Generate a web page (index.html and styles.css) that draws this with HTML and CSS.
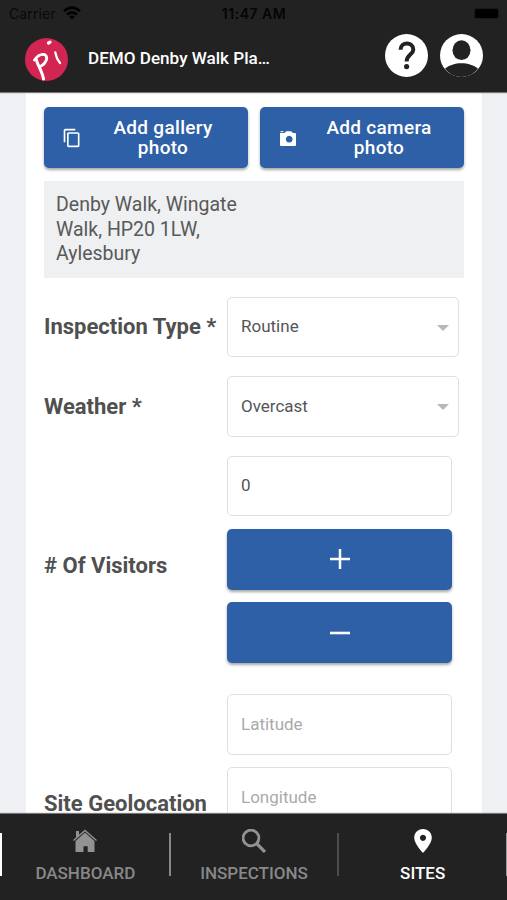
FILE: index.html
```html
<!DOCTYPE html>
<html lang="en">
<head>
<meta charset="utf-8">
<meta name="viewport" content="width=device-width, initial-scale=1">
<title>Denby Walk</title>
<link rel="stylesheet" href="styles.css">
</head>
<body>
<div class="app">
  <header class="header">
    <div class="status">
      <div class="carrier"><span class="carrier-name">Carrier</span>
        <svg class="wifi" viewBox="0 0 18 14" fill="none" stroke="#000" stroke-width="2.7"><path d="M1 5.2Q9-1.8 17 5.2M4 8.6Q9 4.2 14 8.6"/><path d="M9 13.6L5.9 10.6Q9 8.2 12.1 10.6Z" fill="#000" stroke="none"/></svg>
      </div>
      <span class="clock">11:47 AM</span>
      <div class="battery"></div>
    </div>
    <div class="toolbar">
      <svg class="logo" viewBox="0 0 43 43" fill="none" stroke="#fff" stroke-width="3" stroke-linecap="round"><circle cx="21.5" cy="21.5" r="21.5" fill="#d32552" stroke="none"/><path d="M9.500 22C12 18.500 16 16 19 16.500C23.500 17.500 22.500 25 14.500 29" stroke-width="2.900"/><path d="M11.500 22C12.500 27 17.500 34 18.500 41" stroke-width="3"/><path d="M30.300 14.500C31 18.500 32.500 22 35 25" stroke-width="2.300"/><path d="M23.500 5L25 4.200" stroke-width="3.200"/></svg>
      <h1 class="title">DEMO Denby Walk Pla…</h1>
      <div class="actions">
        <svg class="action" viewBox="0 0 43 43"><circle cx="21.500" cy="21.500" r="21.500" fill="#fff"/><path d="M15.600 15.700C15.600 7.600 28.300 7.600 28.300 15.400C28.300 20.700 21.600 20.500 21.600 27.500" fill="none" stroke="#222" stroke-width="4"/><circle cx="21.600" cy="32.600" r="2.600" fill="#222"/></svg>
        <svg class="action" viewBox="0 0 43 43"><circle cx="21.500" cy="21.500" r="21.500" fill="#fff"/><ellipse cx="21.500" cy="16.200" rx="9" ry="9.900" fill="#222"/><path d="M5 34.700C13 27.300 30 27.300 38 34.700C29.500 45.600 13.500 45.600 5 34.700Z" fill="#222"/></svg>
      </div>
    </div>
  </header>
  <main class="content">
    <section class="card">
      <div class="photo-buttons">
        <button class="btn photo"><svg class="btn-icon" viewBox="0 0 24 24" fill="#fff"><path d="M16 1H4c-1.100 0-2 .9-2 2v14h2V3h12V1zm3 4H8c-1.100 0-2 .9-2 2v14c0 1.100.9 2 2 2h11c1.100 0 2-.9 2-2V7c0-1.100-.9-2-2-2zm0 16H8V7h11v14z"/></svg><span class="btn-text">Add gallery<br>photo</span></button>
        <button class="btn photo"><svg class="btn-icon" viewBox="0 0 20 20" fill="#fff"><path fill-rule="evenodd" d="M2 5h4.500l1.700-1.700h5L15 5H17q1 0 1 1v11q0 1-1 1H3q-1 0-1-1zM11.200 7.800a3.400 3.400 0 1 0 .01 0z"/><path d="M2.500 3.200h3v1h-3z"/></svg><span class="btn-text">Add camera<br>photo</span></button>
      </div>
      <address class="address">Denby Walk, Wingate<br>Walk, HP20 1LW,<br>Aylesbury</address>
      <div class="row">
        <div class="label">Inspection Type *</div>
        <div class="fields wide"><div class="field select">Routine<span class="caret"></span></div></div>
      </div>
      <div class="row">
        <div class="label">Weather *</div>
        <div class="fields wide"><div class="field select">Overcast<span class="caret"></span></div></div>
      </div>
      <div class="row">
        <div class="label"># Of Visitors</div>
        <div class="fields">
          <div class="field">0</div>
          <button class="btn step" aria-label="Increase"><svg viewBox="0 0 20 20" stroke="#fff" stroke-width="2.500"><path d="M0 10H20M10 0V20"/></svg></button>
          <button class="btn step" aria-label="Decrease"><svg viewBox="0 0 20 20" stroke="#fff" stroke-width="2.600"><path d="M0 10H20"/></svg></button>
        </div>
      </div>
      <div class="row">
        <div class="label">Site Geolocation</div>
        <div class="fields">
          <div class="field placeholder">Latitude</div>
          <div class="field placeholder">Longitude</div>
          <div class="field placeholder"></div>
        </div>
      </div>
    </section>
  </main>
  <nav class="nav">
    <span class="divider edge"></span>
    <a class="tab"><svg class="tab-icon" viewBox="0 0 24 24" fill="#929292"><path d="M2.500 12L12 3.500L21.500 12V23H14.700V17.200H10.500V23H2.500Z"/><path d="M3 2H6V6.500L3 9.300Z"/><path d="M.5 11.500L12 1.500L23.500 11.500" fill="none" stroke="#929292" stroke-width="1.400"/></svg><span class="tab-name">DASHBOARD</span></a>
    <span class="divider"></span>
    <a class="tab"><svg class="tab-icon" viewBox="0 0 24 24" fill="none" stroke="#929292" stroke-width="2.800"><circle cx="9" cy="9" r="7.900"/><path d="M14.700 14.700L23 23" stroke-width="3.200"/></svg><span class="tab-name">INSPECTIONS</span></a>
    <span class="divider dim"></span>
    <a class="tab active"><svg class="tab-icon" viewBox="0 0 24 24" fill="#fff"><path fill-rule="evenodd" d="M12 0C7 0 3.200 3.800 3.200 8.800C3.200 15.200 12 24 12 24S20.800 15.200 20.800 8.800C20.800 3.800 17 0 12 0ZM12 5.700a3.100 3.100 0 1 1-.01 0z"/></svg><span class="tab-name">SITES</span></a>
    <span class="divider last"></span>
  </nav>
</div>
</body>
</html>
```

FILE: styles.css
```css
* { box-sizing: border-box; }
body { margin: 0; font-family: Roboto, "Liberation Sans", sans-serif; color: #505050; background: #eef0f3; }
.app { height: 900px; display: flex; flex-direction: column; overflow: hidden; }
.header { flex: none; height: 92px; background: #222; display: flex; flex-direction: column; box-shadow: 0 1px 1px #777; z-index: 1; }
.status { height: 28px; padding: 0 8px 0 9px; display: grid; grid-template-columns: 1fr auto 1fr; align-items: center; font-family: Inter, sans-serif; font-size: 14px; line-height: 28px; color: #050505; }
.carrier { display: flex; align-items: center; gap: 7px; }
.carrier-name { color: #090909; letter-spacing: .1px; }
.wifi { width: 18px; height: 14px; margin-top: -2px; }
.clock { font-weight: 600; font-size: 14px; letter-spacing: .5px; }
.battery { justify-self: end; width: 25px; height: 11px; margin-top: -2px; border-radius: 3px; background: #000; border: 1px solid #191919; }
.toolbar { display: flex; align-items: center; height: 60px; padding: 0 24px 0 25px; }
.logo { width: 43px; height: 43px; margin-top: 2px; }
.title { margin: 0 0 0 20px; font-size: 17.100px; font-weight: 500; color: #fff; white-space: nowrap; }
.actions { margin: -6px 0 0 auto; display: flex; gap: 12px; }
.action { width: 43px; height: 43px; }
.content { flex: 1; min-height: 0; overflow: hidden; padding: 0 25px 0 26px; }
.card { background: #fff; padding: 15px 18px 0; }
.photo-buttons { display: grid; grid-template-columns: 1fr 1fr; gap: 12px; }
.btn { border: 0; border-radius: 5px; background: #2d60a7; height: 61px; color: #fff; font-family: inherit; box-shadow: 0 2px 3px rgba(0, 0, 0, .35); }
.photo { display: flex; align-items: center; padding: 0 33px 0 18px; }
.btn-icon { width: 20px; height: 20px; flex: none; }
.btn-text { flex: 1; margin: 0 -4px 0 25px; font-size: 19px; line-height: 19.500px; font-weight: 500; letter-spacing: .3px; white-space: nowrap; }
.address { margin-top: 13px; height: 97px; padding: 12px; background: #eef0f2; font-style: normal; font-size: 19.500px; line-height: 24.500px; color: #595959; }
.row { display: flex; align-items: center; margin-top: 6.500px; }
.address + .row { margin-top: 18.500px; }
.label { width: 183px; font-size: 22px; font-weight: 700; white-space: nowrap; }
.fields { width: 225px; flex: none; }
.fields.wide { width: 232px; }
.fields > * { margin-bottom: 12.500px; }
.field { height: 60.500px; border: 1px solid #dfdfdf; border-radius: 5px; padding: 0 13px 1px; display: flex; align-items: center; font-size: 17px; color: #555; }
.row:has(.wide) .label { padding-bottom: 12.500px; }
.select { justify-content: space-between; padding-right: 9px; }
.caret { border: 6px solid transparent; border-top-color: #b8b8b8; border-bottom: 0; margin-top: 3px; }
.placeholder { color: #aaa; padding-bottom: 0; }
.step { display: flex; width: 100%; align-items: center; justify-content: center; }
.step svg { width: 20px; height: 20px; }
.row + .row:last-child { margin-top: 18.500px; }
.nav { flex: none; height: 86px; background: #222; display: flex; align-items: flex-start; box-shadow: 0 -1px 1px #777; z-index: 1; }
.divider { width: 2px; height: 43px; margin-top: 19px; background: #888; }
.edge { background: #fff; }
.dim { background: #4c4c4c; }
.last { width: 1px; background: #999; }
.tab { flex: 1; display: flex; flex-direction: column; align-items: center; padding-top: 15px; color: #888; }
.tab-icon { width: 24px; height: 24px; }
.tab-name { margin-top: 10px; font-size: 17px; line-height: 20px; font-weight: 500; }
.active { color: #fff; }
```
